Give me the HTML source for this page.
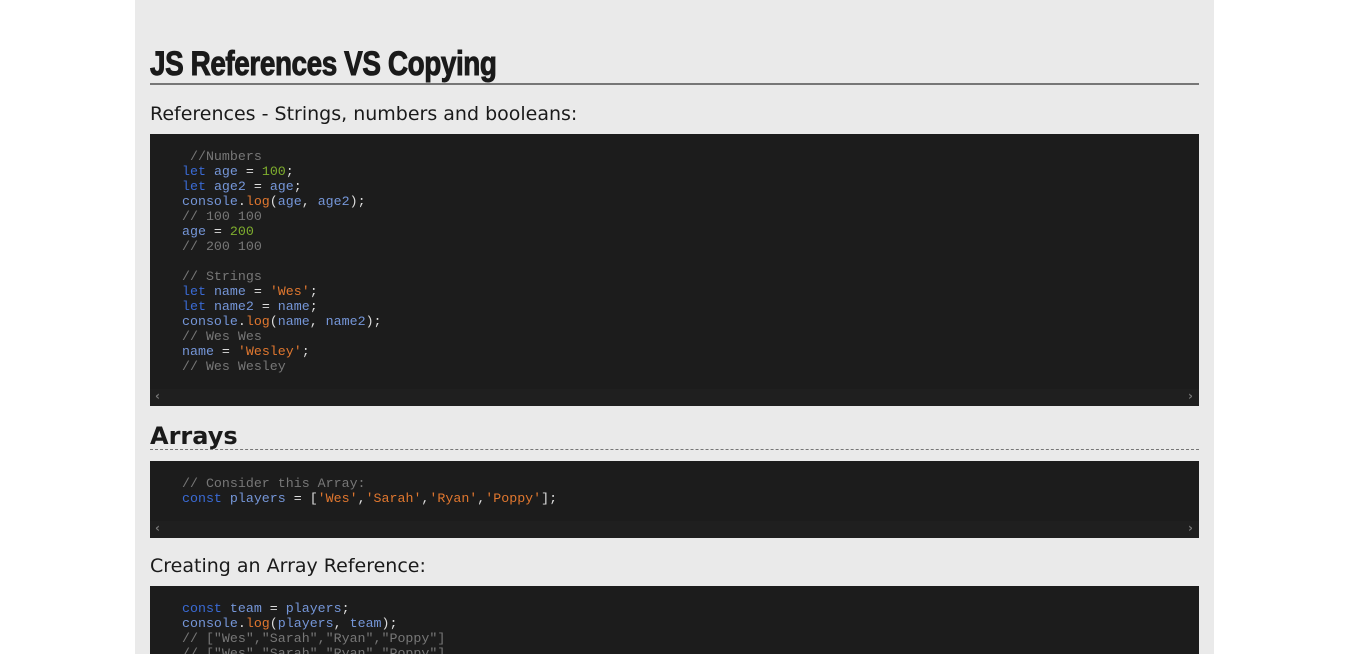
<!DOCTYPE html>
<html><head><style>
body{margin:0;background:#fff;font-family:"DejaVu Sans","Liberation Sans",sans-serif;}
.wrap{position:absolute;left:135px;top:0;width:1079px;height:654px;background:#eaeaea;overflow:hidden;}
h1{position:absolute;left:15px;top:44px;width:1049px;margin:0;height:39px;border-bottom:2px solid #777;font-family:"Liberation Sans",sans-serif;font-weight:bold;font-size:34px;line-height:40px;color:#1a1a1a;letter-spacing:-0.5px;}
h1 span{display:inline-block;transform:scaleX(0.82);transform-origin:left;-webkit-text-stroke:1px #1a1a1a;}
.p{position:absolute;left:15px;font-size:19px;color:#1a1a1a;margin:0;}
.code{position:absolute;left:15px;width:1049px;background:#1c1c1c;}
pre{margin:0;padding:15px 0 0 32px;font-family:"Liberation Mono",monospace;font-size:13.3px;line-height:15px;color:#ddd;}
.sb{position:absolute;left:0;bottom:0;width:100%;height:17px;background:#1f1f1f;color:#777;font-size:12px;font-weight:bold;}
.sb .l{position:absolute;left:5px;top:0}.sb .r{position:absolute;right:6px;top:0}
.c{color:#777}.k{color:#3a6ad4}.v{color:#7596d8}.n{color:#7fae2e}.s{color:#e0772f}.f{color:#e0772f}
h2{position:absolute;left:15px;top:420px;width:1049px;margin:0;height:29px;border-bottom:1px dashed #777;font-size:24px;font-weight:bold;color:#1a1a1a;line-height:33px;}
</style></head><body>
<div class="wrap">
<h1><span>JS References VS Copying</span></h1>
<p class="p" style="top:103px">References - Strings, numbers and booleans:</p>
<div class="code" style="top:134px;height:272px"><pre><span class="c"> //Numbers</span>
<span class="k">let</span> <span class="v">age</span> = <span class="n">100</span>;
<span class="k">let</span> <span class="v">age2</span> = <span class="v">age</span>;
<span class="v">console</span>.<span class="f">log</span>(<span class="v">age</span>, <span class="v">age2</span>);
<span class="c">// 100 100</span>
<span class="v">age</span> = <span class="n">200</span>
<span class="c">// 200 100</span>

<span class="c">// Strings</span>
<span class="k">let</span> <span class="v">name</span> = <span class="s">'Wes'</span>;
<span class="k">let</span> <span class="v">name2</span> = <span class="v">name</span>;
<span class="v">console</span>.<span class="f">log</span>(<span class="v">name</span>, <span class="v">name2</span>);
<span class="c">// Wes Wes</span>
<span class="v">name</span> = <span class="s">'Wesley'</span>;
<span class="c">// Wes Wesley</span></pre><div class="sb"><span class="l">‹</span><span class="r">›</span></div></div>
<h2>Arrays</h2>
<div class="code" style="top:461px;height:77px"><pre><span class="c">// Consider this Array:</span>
<span class="k">const</span> <span class="v">players</span> = [<span class="s">'Wes'</span>,<span class="s">'Sarah'</span>,<span class="s">'Ryan'</span>,<span class="s">'Poppy'</span>];</pre><div class="sb"><span class="l">‹</span><span class="r">›</span></div></div>
<p class="p" style="top:555px">Creating an Array Reference:</p>
<div class="code" style="top:586px;height:100px"><pre><span class="k">const</span> <span class="v">team</span> = <span class="v">players</span>;
<span class="v">console</span>.<span class="f">log</span>(<span class="v">players</span>, <span class="v">team</span>);
<span class="c">// ["Wes","Sarah","Ryan","Poppy"]</span>
<span class="c">// ["Wes","Sarah","Ryan","Poppy"]</span></pre></div>
</div>
</body></html>
